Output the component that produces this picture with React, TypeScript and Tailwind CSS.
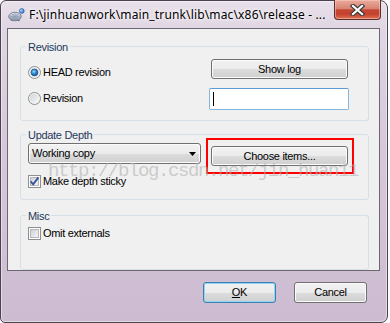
import React from "react";

const btn =
  "flex items-center justify-center border border-[#707070] rounded-[3px] bg-[linear-gradient(#f2f2f2,#ebebeb_50%,#dddddd_50%,#cfcfcf)] shadow-[inset_0_0_0_1px_#fbfbfb] text-black";

function Radio({ checked, id }: { checked?: boolean; id: string }) {
  return (
    <svg width="13" height="13" viewBox="0 0 13 13" className="block shrink-0">
      <defs>
        <linearGradient id={`rb${id}`} x1="0" y1="0" x2="1" y2="1">
          <stop offset="0" stopColor="#cfd3d8" />
          <stop offset="1" stopColor="#f8f8f8" />
        </linearGradient>
        <radialGradient id={`rd${id}`} cx="0.4" cy="0.35" r="0.75">
          <stop offset="0" stopColor="#9adcfa" />
          <stop offset="0.45" stopColor="#2e8ad0" />
          <stop offset="1" stopColor="#0e4882" />
        </radialGradient>
      </defs>
      <circle cx="6.5" cy="6.5" r="6" fill="#f4f4f4" stroke="#8b8d8f" />
      <circle cx="6.5" cy="6.5" r="4.6" fill={`url(#rb${id})`} />
      {checked && (
        <circle cx="6.5" cy="6.5" r="3.4" fill={`url(#rd${id})`} stroke="#1a4d85" strokeWidth="0.7" />
      )}
    </svg>
  );
}

function Check({ checked, id }: { checked?: boolean; id: string }) {
  return (
    <svg width="13" height="13" viewBox="0 0 13 13" className="block shrink-0">
      <defs>
        <linearGradient id={`cb${id}`} x1="0" y1="0" x2="1" y2="1">
          <stop offset="0" stopColor="#cbcfd5" />
          <stop offset="1" stopColor="#f7f7f7" />
        </linearGradient>
      </defs>
      <rect x="0.5" y="0.5" width="12" height="12" fill="#fdfdfd" stroke="#8e8f8f" />
      <rect x="2.5" y="2.5" width="8" height="8" fill={`url(#cb${id})`} stroke="#b4b8bd" />
      {checked && (
        <path d="M2.6 6.3 L5.2 9.3 L10.4 2.4" fill="none" stroke="#3f5596" strokeWidth="1.9" />
      )}
    </svg>
  );
}

function TurtleIcon() {
  return (
    <svg width="17" height="15" viewBox="0 0 17 15" className="block shrink-0">
      <defs>
        <linearGradient id="shell" x1="0" y1="0" x2="0" y2="1">
          <stop offset="0" stopColor="#d7dde6" />
          <stop offset="1" stopColor="#8592a6" />
        </linearGradient>
        <radialGradient id="head" cx="0.35" cy="0.35" r="0.7">
          <stop offset="0" stopColor="#a8d8ff" />
          <stop offset="1" stopColor="#2c6cc0" />
        </radialGradient>
      </defs>
      <ellipse cx="4" cy="13" rx="1.6" ry="1.1" fill="#7d8aa0" />
      <ellipse cx="10.5" cy="13.2" rx="1.6" ry="1.1" fill="#7d8aa0" />
      <ellipse cx="7" cy="9.5" rx="6.3" ry="4.3" fill="url(#shell)" stroke="#66748b" strokeWidth="0.8" />
      <path d="M2.5 9.5 H11.5 M7 5.6 V13.4 M4 7 L10 12 M10 7 L4 12" stroke="#8d9ab0" strokeWidth="0.6" />
      <circle cx="13.8" cy="4" r="2.4" fill="url(#head)" stroke="#24528f" strokeWidth="0.6" />
    </svg>
  );
}

function CloseX() {
  return (
    <svg width="15" height="12" viewBox="0 0 15 12" className="block">
      <path d="M3 2 L12 10 M12 2 L3 10" stroke="#3b3b3b" strokeWidth="4.4" strokeLinecap="square" />
      <path d="M3 2 L12 10 M12 2 L3 10" stroke="#ffffff" strokeWidth="2.2" strokeLinecap="square" />
    </svg>
  );
}

export default function App() {
  return (
    <div className="relative w-[390px] h-[323px] bg-white overflow-hidden font-['Liberation_Sans',Arial,sans-serif] text-[11px] tracking-[-0.3px] text-black">
      <div className="flex flex-col w-[388px] h-[323px] border border-[#4a424c] rounded-tl-[6px] rounded-tr-[8px] rounded-bl-[5px] rounded-br-[7px] bg-[linear-gradient(180deg,#e8e0ea_0px,#e0d6e3_28px,#d6c8da_140px,#cdbcd1_100%)] shadow-[inset_0_0_0_1px_rgba(255,255,255,0.45)]">
        {/* Title bar */}
        <div className="flex items-center h-[27px] pl-[7px] pr-[6px]">
          <TurtleIcon />
          <span className="ml-[4px] font-['Noto_Sans',sans-serif] text-[12px] tracking-[0.15px] whitespace-nowrap [text-shadow:0_0_6px_#ffffff,0_0_3px_#ffffff]">
            F:\jinhuanwork\main_trunk\lib\mac\x86\release - ...
          </span>
          <div className="ml-auto self-start mt-[-1px] flex items-center justify-center w-[47px] h-[20px] border border-[#5b2f2a] border-t-0 rounded-b-[4px] bg-[linear-gradient(#e9ab9c,#d98474_45%,#c54534_52%,#c4432f_75%,#de7153)] shadow-[inset_0_0_0_1px_rgba(255,210,200,0.5)]">
            <CloseX />
          </div>
        </div>

        {/* Client area */}
        <div className="ml-[6px] w-[373px] h-[243px] shrink-0 bg-[#f0f0f0] border border-[#6e6670] pl-[12px]">
          {/* Revision */}
          <fieldset className="mt-[8px] w-[349px] border border-[#d5dfe5] rounded-[3px]">
            <legend className="ml-[5px] px-[2px] pt-[2px] leading-[16px] text-[#1e395b]">Revision</legend>
            <div className="pt-[4px] pb-[10px] pl-[7px]">
              <div className="flex items-start">
                <div className="w-[181px] mt-[7px] flex items-center gap-[2px] leading-[13px]">
                  <Radio checked id="a" />
                  <span>HEAD revision</span>
                </div>
                <div className={`${btn} ml-[2px] w-[137px] h-[20px]`}>Show log</div>
              </div>
              <div className="flex items-start mt-[9px]">
                <div className="w-[181px] mt-[4px] flex items-center gap-[2px] leading-[13px]">
                  <Radio id="b" />
                  <span>Revision</span>
                </div>
                <div className="flex items-center w-[140px] h-[22px] bg-white border border-[#84b4e0] border-t-[#5d9bd6] rounded-[2px] pl-[3px]">
                  <div className="w-px h-[14px] bg-black" />
                </div>
              </div>
            </div>
          </fieldset>

          {/* Update Depth */}
          <fieldset className="mt-[4px] w-[349px] border border-[#d5dfe5] rounded-[3px]">
            <legend className="ml-[5px] px-[2px] pt-[2px] leading-[16px] text-[#1e395b]">Update Depth</legend>
            <div className="pb-[11px] pl-[7px]">
              <div className="flex items-start">
                <div className="flex items-center w-[173px] h-[21px] border border-[#707070] rounded-[3px] bg-[linear-gradient(#f2f2f2,#ebebeb_50%,#dddddd_50%,#cfcfcf)] shadow-[inset_0_0_0_1px_#fbfbfb] pl-[3px] pr-[4px]">
                  <span>Working copy</span>
                  <svg width="7" height="4" viewBox="0 0 7 4" className="ml-auto block">
                    <path d="M0 0 H7 L3.5 4 Z" fill="#000" />
                  </svg>
                </div>
                <div className={`${btn} ml-[10px] mt-[3px] w-[137px] h-[20px]`}>Choose items...</div>
              </div>
              <div className="mt-[9px] flex items-center gap-[2px] leading-[13px]">
                <Check checked id="a" />
                <span>Make depth sticky</span>
              </div>
            </div>
          </fieldset>

          {/* Misc */}
          <fieldset className="mt-[6px] w-[349px] border border-[#d5dfe5] rounded-[3px]">
            <legend className="ml-[5px] px-[2px] pt-[2px] leading-[16px] text-[#1e395b]">Misc</legend>
            <div className="pt-[3px] pb-[29px] pl-[7px]">
              <div className="flex items-center gap-[2px] leading-[13px]">
                <Check id="b" />
                <span>Omit externals</span>
              </div>
            </div>
          </fieldset>
        </div>

        {/* Footer buttons on glass */}
        <div className="flex justify-end gap-[18px] pt-[11px] pr-[20px]">
          <div className="flex items-center justify-center w-[73px] h-[21px] border border-[#3c7fb1] rounded-[3px] bg-[linear-gradient(#f2f2f2,#ebebeb_50%,#dddddd_50%,#cfcfcf)] shadow-[inset_0_0_0_1px_#8fd6f5]">
            <span>
              <span className="underline underline-offset-[1px]">O</span>K
            </span>
          </div>
          <div className={`${btn} w-[73px] h-[21px]`}>Cancel</div>
        </div>
      </div>

      {/* red highlight rectangle */}
      <div className="absolute left-[206px] top-[138px] w-[148px] h-[36px] border-2 border-[#ff0000] pointer-events-none" />

      {/* watermark */}
      <div className="absolute left-[48px] top-[162px] font-['Liberation_Mono',monospace] text-[19px] leading-[19px] tracking-[-1.4px] text-[#b0b0b0]/60 whitespace-nowrap pointer-events-none">
        http://blog.csdn.net/jin_huan11
      </div>
    </div>
  );
}
